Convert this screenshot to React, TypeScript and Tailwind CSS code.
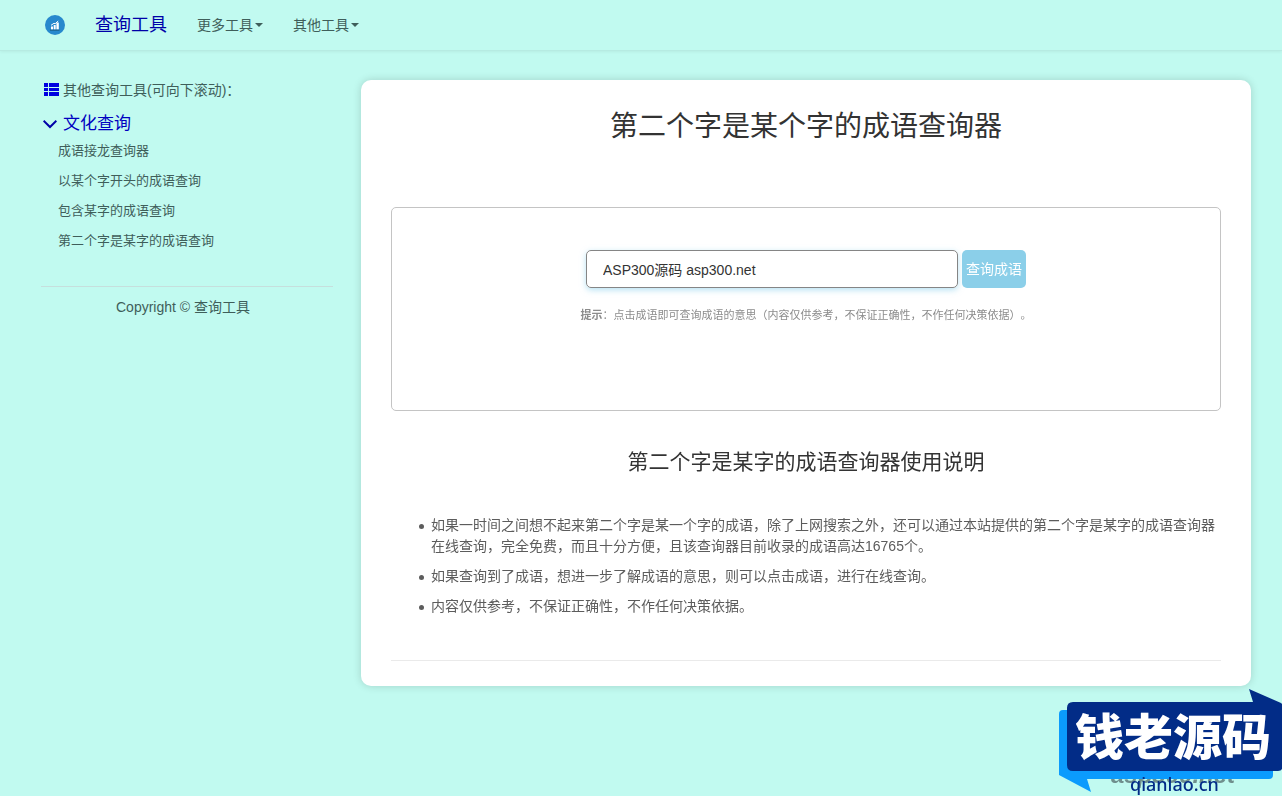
import React, { useEffect, useRef, useState } from 'react';

const navItems = ['更多工具', '其他工具'];

const cultureLinks = [
  '成语接龙查询器',
  '以某个字开头的成语查询',
  '包含某字的成语查询',
  '第二个字是某字的成语查询',
];

const instructions = [
  '如果一时间之间想不起来第二个字是某一个字的成语，除了上网搜索之外，还可以通过本站提供的第二个字是某字的成语查询器在线查询，完全免费，而且十分方便，且该查询器目前收录的成语高达16765个。',
  '如果查询到了成语，想进一步了解成语的意思，则可以点击成语，进行在线查询。',
  '内容仅供参考，不保证正确性，不作任何决策依据。',
];

const Logo = () => (
  <svg viewBox="0 0 20 20" className="h-5 w-5" aria-hidden="true">
    <circle cx="10" cy="10" r="10" fill="#2788cd" />
    <path d="M6 11.5h2v3H6zM8.7 10h2v4.5h-2zM11.4 7.5h2.4v7h-2.4z" fill="#fff" />
    <path d="M6 10.3l3-2 1.2.4L13.2 6" fill="none" stroke="#fff" strokeWidth="1" />
    <path d="M5 15.2h9.5" stroke="#1c5f86" strokeWidth="1" />
  </svg>
);

const ListIcon = () => (
  <svg viewBox="0 0 15 14" className="h-[14px] w-[15px]" fill="#0000e0" aria-hidden="true">
    <path d="M0 0h4v4H0zM5 0h10v4H5zM0 5h4v3H0zM5 5h10v3H5zM0 9h4v4H0zM5 9h10v4H5z" />
  </svg>
);

const ChevronIcon = () => (
  <svg viewBox="0 0 14 9" className="h-[9px] w-[14px]" aria-hidden="true">
    <path d="M0.6 0.8L7 7l6.4-6.2" fill="none" stroke="#0000a8" strokeWidth="2" />
  </svg>
);

const SiteBadge = () => (
  <svg
    viewBox="0 0 223 108"
    className="pointer-events-none fixed right-0 bottom-0 h-[108px] w-[223px]"
  >
    <text x="52" y="95" fontSize="24" fontWeight="700" fontStyle="italic" fill="#6f8f8d" fontFamily="Liberation Sans, sans-serif">
      asp300.net
    </text>
    <path d="M4 22h206q4 0 4 4v61q0 4-4 4H28l4 13L0 87V26q0-4 4-4z" fill="#0b9bfd" />
    <path d="M14 14h180L190 1l32 14 1 1v65q-1 2-4 2H14q-6 0-6-6V20q0-6 6-6z" fill="#022c87" />
    <text x="16" y="67" fontSize="49" fontWeight="900" fill="#fff" fontFamily="Noto Sans CJK SC, sans-serif">
      钱老源码
    </text>
    <text x="71" y="103" fontSize="18" fontWeight="500" fill="#022c87" fontFamily="Noto Sans, sans-serif">
      qianlao.cn
    </text>
  </svg>
);

const App = () => {
  const [keyword, setKeyword] = useState('ASP300源码 asp300.net');
  const inputRef = useRef<HTMLInputElement>(null);

  useEffect(() => {
    const input = inputRef.current;
    if (input) {
      input.focus();
      input.setSelectionRange(input.value.length, input.value.length);
    }
  }, []);

  return (
    <div className="min-h-screen bg-[#c1faf0] font-['Liberation_Sans','Noto_Sans_CJK_SC',sans-serif] text-sm leading-5 text-[#333]">
      {/* Navbar */}
      <nav className="flex h-[51px] items-center border-b border-[#b6ebe2] pl-[45px] shadow-[0_1px_3px_rgba(0,0,0,0.06)]">
        <a href="#" aria-label="首页">
          <Logo />
        </a>
        <a href="#" className="ml-[30px] text-lg text-[#0000a8]">
          查询工具
        </a>
        <div className="ml-[30px] flex gap-[30px]">
          {navItems.map((item) => (
            <button key={item} type="button" className="flex items-center text-[#3f5e5a]">
              {item}
              <span className="ml-0.5 border-x-4 border-t-4 border-x-transparent border-t-[#3f5e5a]" />
            </button>
          ))}
        </div>
      </nav>

      <div className="flex items-start gap-7 pt-[29px] pr-[31px] pb-8 pl-[41px]">
        {/* Sidebar */}
        <aside className="w-[292px] shrink-0 text-[#3f5e5a]">
          <div className="flex items-center gap-1 pl-[3px]">
            <ListIcon />
            其他查询工具(可向下滚动)：
          </div>
          <h2 className="mt-3 flex items-center gap-1.5 pl-0.5 text-[17px] leading-6 text-[#0000c0]">
            <ChevronIcon />
            文化查询
          </h2>
          <ul className="pl-[17px] text-[13px] leading-[30px]">
            {cultureLinks.map((link) => (
              <li key={link}>
                <a href="#">{link}</a>
              </li>
            ))}
          </ul>
          <hr className="mt-[30px] border-[#c6dfdd]" />
          <p className="mt-2.5 pr-2 text-center">Copyright © 查询工具</p>
        </aside>

        {/* Main card */}
        <main className="min-w-0 flex-1 rounded-[10px] bg-white px-[30px] pt-[31px] pb-[25px] shadow-[0_0_8px_rgba(0,0,0,0.16)]">
          <h1 className="text-center text-[28px] leading-8">第二个字是某个字的成语查询器</h1>

          <form
            className="mt-16 h-[204px] rounded-[5px] border border-[#c4c4c4] pt-[42px] text-center"
            onSubmit={(e) => e.preventDefault()}
          >
            <div className="flex justify-center gap-1">
              <input
                ref={inputRef}
                type="text"
                aria-label="成语查询"
                value={keyword}
                onChange={(e) => setKeyword(e.target.value)}
                className="h-[38px] w-[372px] rounded-[5px] border border-[#858585] px-4 shadow-[0_2px_6px_rgba(135,206,235,0.6)] outline-none"
              />
              <button type="submit" className="h-[38px] rounded-[5px] bg-[#8bcfe9] px-1 text-white">
                查询成语
              </button>
            </div>
            <p className="mt-[17px] text-[11px] text-[#8c8c8c] [text-spacing-trim:space-all]">
              <strong>提示</strong>：点击成语即可查询成语的意思（内容仅供参考，不保证正确性，不作任何决策依据）。
            </p>
          </form>

          <h2 className="mt-[39px] text-center text-[21px] leading-6">第二个字是某字的成语查询器使用说明</h2>

          <ul className="mt-[41px] flex flex-col gap-[9px] pl-7 leading-[21px] text-[#5c5c5c]">
            {instructions.map((text) => (
              <li key={text} className="flex gap-[7px]">
                <span className="mt-[9px] h-[5px] w-[5px] shrink-0 rounded-full bg-[#5c5c5c]" />
                <span>{text}</span>
              </li>
            ))}
          </ul>
          <hr className="mt-[43px] border-[#eaeaea]" />
        </main>
      </div>

      <SiteBadge />
    </div>
  );
};

export default App;
